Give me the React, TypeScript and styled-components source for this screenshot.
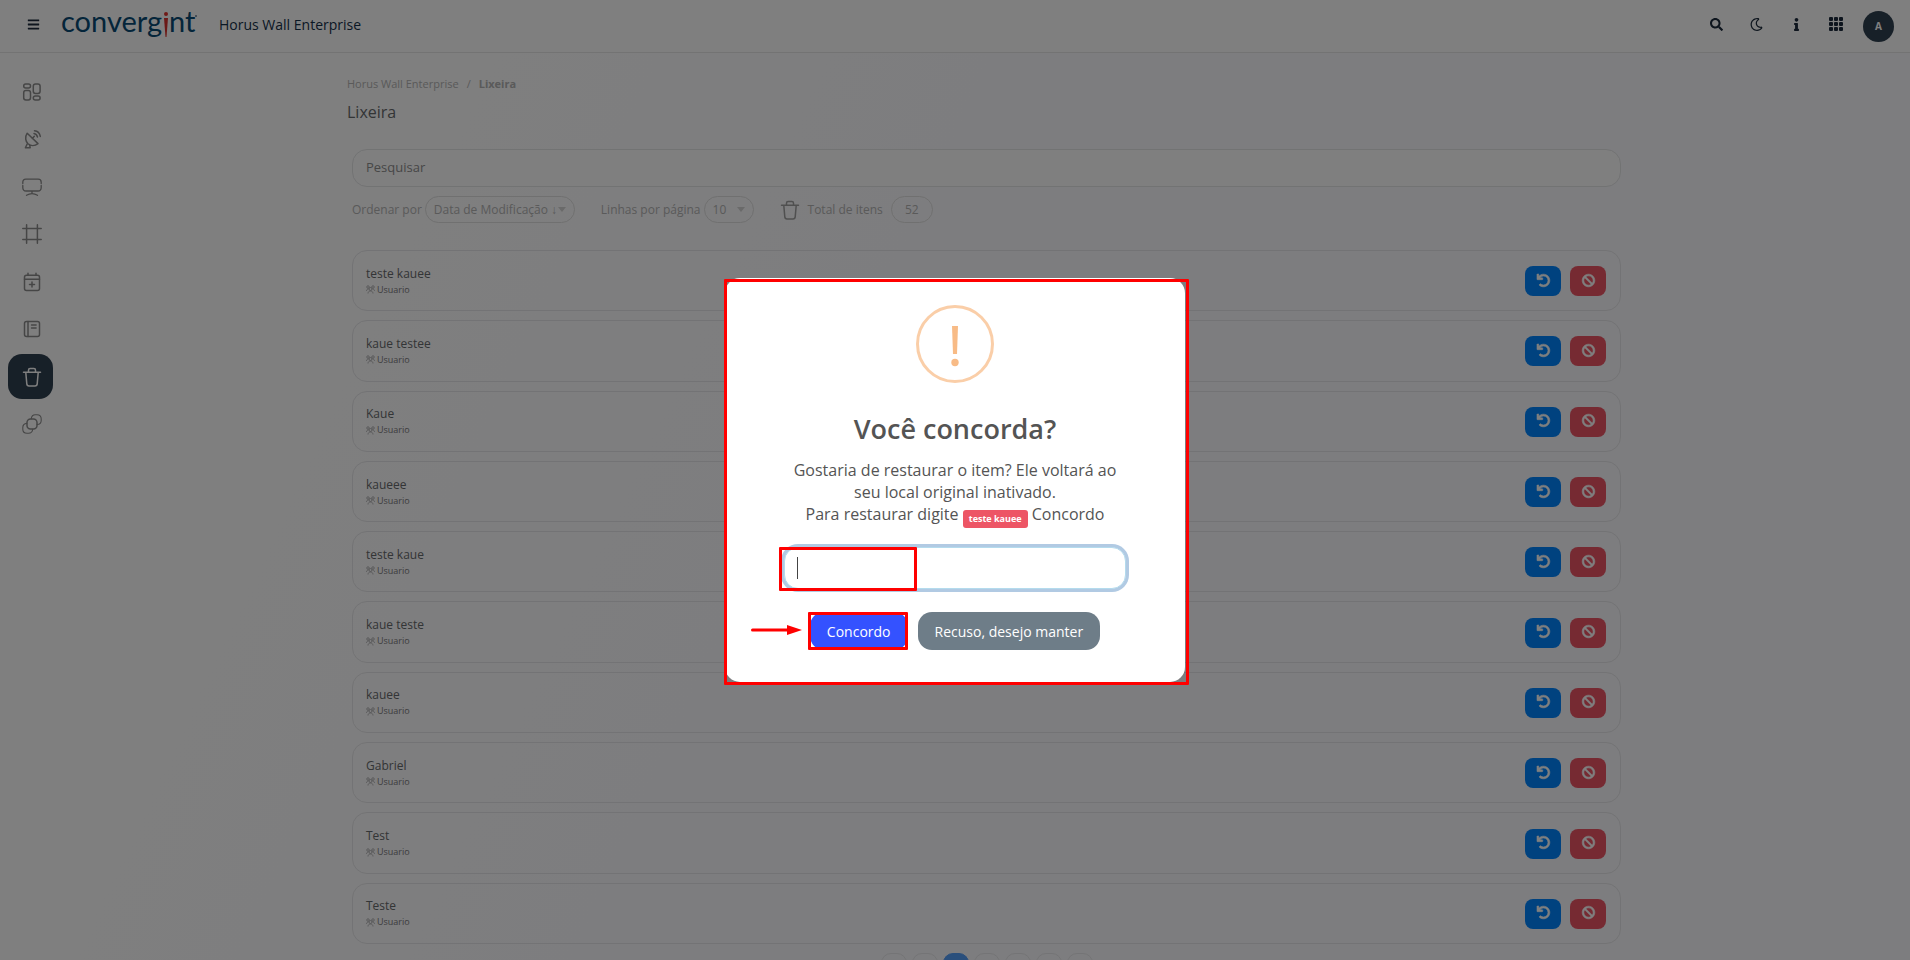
import React from "react";
import styled, { createGlobalStyle } from "styled-components";
import { FaBan, FaBars, FaInfo, FaRegMoon, FaSearch, FaUndo } from "react-icons/fa";
import { BsGrid3X3GapFill } from "react-icons/bs";

const GlobalStyle = createGlobalStyle`
  *, *::before, *::after { box-sizing: border-box; }
  html, body { margin: 0; height: 100%; overflow: hidden; }
  body {
    font-family: "Open Sans", "Noto Sans", sans-serif;
    font-size: 12px;
    color: #676a6c;
    background: #ffffff;
  }
  button, input, select { font-family: inherit; color: inherit; }
  a { color: inherit; text-decoration: none; }
`;

const Page = styled.div`
  min-height: 100vh;
  background: linear-gradient(115deg, #ffffff 15%, #fafafe 50%);
`;

const Header = styled.header`
  display: flex;
  align-items: center;
  height: 53px;
  padding: 0 16px 4px 26px;
  background: #ffffff;
  border-bottom: 1px solid #e7e7e7;
`;

const IconButton = styled.button`
  display: flex;
  align-items: center;
  justify-content: center;
  width: 14px;
  height: 24px;
  padding: 0;
  border: 0;
  background: none;
  color: #1c2b3c;
  svg { flex: none; }
`;

const Brand = styled.a`
  display: flex;
  margin: 0 20px 0 21px;
  svg { overflow: visible; }
`;

const AppName = styled.span`
  font-size: 14px;
  color: #14304a;
`;

const HeaderTools = styled.div`
  display: flex;
  align-items: center;
  gap: 20px;
  margin-left: auto;
`;

const ToolGroup = styled.div`
  display: flex;
  gap: 26px;
`;

const Avatar = styled.button`
  width: 31px;
  height: 31px;
  margin-top: 4px;
  padding: 0;
  border: 0;
  border-radius: 50%;
  background: #2f4050;
  color: #ffffff;
  font-size: 10px;
  font-weight: 700;
`;

const Body = styled.div`
  display: flex;
  align-items: flex-start;
`;

const Sidebar = styled.nav`
  display: flex;
  flex: none;
  flex-direction: column;
  justify-content: space-between;
  width: 63px;
  min-height: 378px;
  margin-top: 16px;
  padding-left: 8px;
`;

const NavLink = styled.a<{ $active?: boolean }>`
  display: flex;
  align-items: center;
  justify-content: center;
  width: 45px;
  height: 45px;
  padding-left: 3px;
  border-radius: 14px;
  background: ${(p) => (p.$active ? "#2f4050" : "transparent")};
  color: ${(p) => (p.$active ? "#ffffff" : "#8c8c8c")};
`;

const Main = styled.main`
  width: 100%;
  max-width: 1279px;
  margin: 0 auto;
  padding-top: 22px;
`;

const Breadcrumb = styled.ol`
  display: flex;
  gap: 8px;
  margin: 0;
  padding: 0;
  list-style: none;
  font-size: 11px;
  line-height: 18px;
  color: #b4b4b4;
`;

const Heading = styled.h1`
  margin: 5px 0 23px;
  font-size: 16px;
  font-weight: 400;
  line-height: 28px;
`;

const Content = styled.div`
  padding: 0 5px;
`;

const SearchInput = styled.input`
  display: block;
  width: 100%;
  height: 38px;
  padding: 0 13px 2px;
  border: 1px solid #e5e6e7;
  border-radius: 15px;
  background: #ffffff;
  font-size: 13px;
  &::placeholder { color: #8e8e8e; opacity: 1; }
`;

const Filters = styled.div`
  display: flex;
  align-items: center;
  height: 27px;
  margin: 9px 0 27px;
  color: #b4b4b4;
`;

const FilterLabel = styled.label`
  display: flex;
  align-items: center;
  gap: 3px;
  margin-right: 26px;
`;

const SelectBox = styled.span<{ $width: number }>`
  display: flex;
  align-items: center;
  position: relative;
  width: ${(p) => p.$width}px;
  height: 27px;
  border: 1px solid #e0e0e0;
  border-radius: 14px;
  select {
    width: 100%;
    padding: 0 8px;
    border: 0;
    background: none;
    appearance: none;
    font-size: 12px;
  }
  svg {
    position: absolute;
    right: 8px;
    pointer-events: none;
  }
`;

const Total = styled.span`
  display: flex;
  align-items: center;
  gap: 8px;
  svg { color: #a0a0a0; }
`;

const TotalCount = styled.output`
  width: 42px;
  border: 1px solid #e0e0e0;
  border-radius: 14px;
  line-height: 25px;
  text-align: center;
`;

const List = styled.ul`
  display: grid;
  grid-auto-rows: 1fr;
  gap: 9px;
  min-height: 694px;
  margin: 0;
  padding: 0;
  list-style: none;
`;

const Row = styled.li`
  display: flex;
  align-items: center;
  gap: 9px;
  padding: 1px 14px 0 13px;
  border: 1px solid #e7e7ea;
  border-radius: 15px;
`;

const RowText = styled.div`
  flex: 1;
  padding-top: 1px;
`;

const RowTitle = styled.div`
  font-size: 12px;
  line-height: 16px;
`;

const RowKind = styled.div`
  display: flex;
  align-items: center;
  gap: 2px;
  font-size: 9px;
  line-height: 16px;
  color: #7a7a7c;
  svg { opacity: 0.7; }
`;

const ActionButton = styled.button<{ $danger?: boolean }>`
  display: flex;
  align-items: center;
  justify-content: center;
  width: 36px;
  height: 30px;
  padding: 0 0 2px;
  border: 0;
  border-radius: 8px;
  background: ${(p) => (p.$danger ? "#ed5565" : "#0084ff")};
  color: #ffffff;
  svg { stroke: currentColor; stroke-width: 24px; overflow: visible; }
`;

const Pagination = styled.nav`
  display: flex;
  justify-content: center;
  gap: 5px;
  margin-top: 9px;
`;

const PageButton = styled.button<{ $current?: boolean }>`
  min-width: 26px;
  height: 34px;
  border: 1px solid ${(p) => (p.$current ? "#549ef8" : "#e9e9ec")};
  border-radius: 10px;
  background: ${(p) => (p.$current ? "#549ef8" : "transparent")};
  color: ${(p) => (p.$current ? "#ffffff" : "#b4b4b4")};
  font-size: 12px;
`;

const Backdrop = styled.div`
  position: fixed;
  inset: 0;
  display: flex;
  align-items: center;
  justify-content: center;
  background: rgba(0, 0, 0, 0.5);
`;

const Dialog = styled.section`
  position: relative;
  display: flex;
  flex-direction: column;
  align-items: center;
  width: 460px;
  padding: 27px 20px 32px;
  border-radius: 15px;
  background: #ffffff;
  color: #545454;
`;

const DialogTitle = styled.h2`
  margin: 26px 0 0;
  font-size: 27px;
  font-weight: 600;
  line-height: 40px;
`;

const DialogText = styled.p`
  width: 340px;
  margin: 10px 0 22px;
  font-size: 16px;
  line-height: 22px;
  text-align: center;
`;

const Tag = styled.span`
  display: inline-block;
  margin-bottom: -3px;
  padding: 0 6px;
  border-radius: 3px;
  background: #ed5565;
  color: #ffffff;
  font-size: 9px;
  font-weight: 700;
  line-height: 18px;
  vertical-align: -2px;
`;

const Marked = styled.div`
  position: relative;
`;

const Highlight = styled.span<{ $inset: string }>`
  position: absolute;
  inset: ${(p) => p.$inset};
  border: 3px solid #ff0000;
  border-radius: 1px;
  pointer-events: none;
`;

const ConfirmInput = styled.input`
  display: block;
  width: 342px;
  height: 42px;
  padding: 0 12px;
  border: 1px solid #b4dbed;
  border-radius: 14px;
  outline: 0;
  box-shadow: 0 0 0 3px #b1cae3;
  font-size: 18px;
`;

const Caret = styled.span`
  position: absolute;
  top: 10px;
  left: 13px;
  width: 1px;
  height: 22px;
  background: #444444;
`;

const DialogActions = styled.div`
  display: flex;
  gap: 10px;
  margin-top: 23px;
`;

const DialogButton = styled.button<{ $primary?: boolean }>`
  height: 38px;
  padding: 0 17px;
  border: 0;
  border-radius: 14px;
  background: ${(p) => (p.$primary ? "#3452ff" : "#6e7d88")};
  color: #ffffff;
  font-size: 14px;
`;

const Arrow = styled.svg`
  position: absolute;
  top: 13px;
  right: 106px;
`;

const strokeProps = {
  fill: "none",
  stroke: "currentColor",
  strokeWidth: 1.5,
  strokeLinecap: "round" as const,
  strokeLinejoin: "round" as const,
};

const Glyph = ({ children, size = 20 }: { children: React.ReactNode; size?: number }) => (
  <svg width={size} height={size} viewBox="0 0 20 20" aria-hidden="true" {...strokeProps}>
    {children}
  </svg>
);

const TrashGlyph = () => (
  <Glyph>
    <path d="M1.5 5.3h17M6.5 5V3.2Q6.5 1.6 8.1 1.6h3.8q1.6 0 1.6 1.6V5M3.8 5.5l1 11.4q.2 2.1 2.2 2.1h6q2 0 2.2-2.1l1-11.4" />
  </Glyph>
);

const navItems: { label: string; active?: boolean; icon: React.ReactNode }[] = [
  {
    label: "Painel",
    icon: (
      <Glyph>
        <rect x="1.7" y="2" width="6.8" height="4" rx="2" />
        <rect x="1.7" y="8.6" width="6.8" height="9.4" rx="2.2" />
        <rect x="11.3" y="2" width="6.8" height="9.4" rx="2.2" />
        <rect x="11.3" y="14" width="6.8" height="4" rx="2" />
      </Glyph>
    ),
  },
  {
    label: "Fontes",
    icon: (
      <Glyph>
        <path d="M5.2 4.2C2.6 8 3.6 12.6 6 14.8c2.6 2.2 6.8 2.3 10-.2zM5.4 14.5 3.4 18.7h4.8L7.5 15.7M10.3 9.5l2-2.3M12 4.6c1.8.3 3 1.5 3.5 3.4M12.5 1.8c3 .3 5.2 2.5 5.8 5.6" />
      </Glyph>
    ),
  },
  {
    label: "Monitores",
    icon: (
      <Glyph>
        <path d="M.8 6.5V5.2q0-3 3-3h12.4q3 0 3 3v1.3M.8 8.5v2q0 3.5 3.3 3.5h11.8q3.3 0 3.3-3.5v-2M10 14v2.5M4.5 18.3q5.5-3.2 11 0" strokeWidth={1.3} />
      </Glyph>
    ),
  },
  {
    label: "Molduras",
    icon: (
      <Glyph>
        <path d="M4.6.8v18.4M15.4.8v18.4M.8 4.6h18.4M.8 15.4h18.4" />
      </Glyph>
    ),
  },
  {
    label: "Agenda",
    icon: (
      <Glyph>
        <rect x="2.5" y="3.2" width="15" height="15.2" rx="2" />
        <path d="M2.5 7.3h15M6 1.3v1.9M14 1.3v1.9M10 10v5M7.5 12.5h5" />
      </Glyph>
    ),
  },
  {
    label: "Relatórios",
    icon: (
      <Glyph>
        <rect x="2.5" y="2.5" width="15" height="15" rx="2" />
        <path d="M6 2.5v15M9.5 6h4.6M9.5 9h4.6" />
      </Glyph>
    ),
  },
  { label: "Lixeira", active: true, icon: <TrashGlyph /> },
  {
    label: "Camadas",
    icon: (
      <Glyph>
        <rect x="5" y="5" width="10" height="10" rx="3.5" />
        <path d="M9.2 4.8c.4-2.7 1.5-4 4-4H15c2.8 0 4.2 1.4 4.2 4.2v1.5c0 2.5-1.4 3.8-4 4M4.800 9.400c-2.700.3-4 1.600-4 4.100v1.700c0 2.700 1.400 4 4.200 4h1.500c2.600 0 3.900-1.300 4.200-4" strokeWidth={1.1} />
      </Glyph>
    ),
  },
];

const Logo = () => (
  <svg width="138" height="36" viewBox="0 0 138 36" role="img" aria-label="convergint">
    <g fill="#084a74" fontFamily="Lato, sans-serif" fontSize="29">
      <text x="0" y="26">converg</text>
      <text x="108" y="26">nt</text>
    </g>
    <circle cx="105" cy="8" r="2" fill="#e0342f" />
    <path d="M103 12h4l-1.5 19h-1z" fill="#d8332e" />
    <circle cx="135" cy="10" r="1" fill="#6b8296" />
  </svg>
);

const UsersGlyph = () => (
  <svg width="9" height="9" viewBox="0 0 18 18" aria-hidden="true" fill="none" stroke="currentColor" strokeWidth="1.5">
    <circle cx="9" cy="8" r="3" />
    <circle cx="4" cy="4" r="2.5" />
    <circle cx="14" cy="4" r="2.5" />
    <path d="M4 17c0-3 2-5 5-5s5 2 5 5M1 12c0-2 1-4 4-4M17 12c0-2-1-4-4-4" />
  </svg>
);

const Chevron = () => (
  <svg width="8" height="5" viewBox="0 0 8 5" aria-hidden="true">
    <path d="M0 0h8L4 5z" fill="#d4d4d4" />
  </svg>
);

const items = [
  "teste kauee",
  "kaue testee",
  "Kaue",
  "kaueee",
  "teste kaue",
  "kaue teste",
  "kauee",
  "Gabriel",
  "Test",
  "Teste",
];

const pages = ["«", "‹", "1", "2", "3", "›", "»"];

export default function App() {
  return (
    <>
      <GlobalStyle />
      <Page>
        <Header>
          <IconButton aria-label="Menu"><FaBars size={13} /></IconButton>
          <Brand href="#"><Logo /></Brand>
          <AppName>Horus Wall Enterprise</AppName>
          <HeaderTools>
            <ToolGroup>
              <IconButton aria-label="Buscar"><FaSearch size={13} /></IconButton>
              <IconButton aria-label="Modo escuro"><FaRegMoon size={13} /></IconButton>
              <IconButton aria-label="Informações"><FaInfo size={13} /></IconButton>
              <IconButton aria-label="Aplicativos"><BsGrid3X3GapFill size={16} /></IconButton>
            </ToolGroup>
            <Avatar aria-label="Conta">A</Avatar>
          </HeaderTools>
        </Header>
        <Body>
          <Sidebar aria-label="Principal">
            {navItems.map((item) => (
              <NavLink key={item.label} href="#" aria-label={item.label} $active={item.active}>
                {item.icon}
              </NavLink>
            ))}
          </Sidebar>
          <Main>
            <Breadcrumb>
              <li><a href="#">Horus Wall Enterprise</a></li>
              <li>/</li>
              <li><b>Lixeira</b></li>
            </Breadcrumb>
            <Heading>Lixeira</Heading>
            <Content>
              <SearchInput type="search" placeholder="Pesquisar" aria-label="Pesquisar" />
              <Filters>
                <FilterLabel>
                  Ordenar por
                  <SelectBox $width={150}>
                    <select><option>Data de Modificação ↓</option></select>
                    <Chevron />
                  </SelectBox>
                </FilterLabel>
                <FilterLabel>
                  Linhas por página
                  <SelectBox $width={50}>
                    <select><option>10</option></select>
                    <Chevron />
                  </SelectBox>
                </FilterLabel>
                <Total>
                  <TrashGlyph />
                  Total de itens
                  <TotalCount>52</TotalCount>
                </Total>
              </Filters>
              <List>
                {items.map((name) => (
                  <Row key={name}>
                    <RowText>
                      <RowTitle>{name}</RowTitle>
                      <RowKind><UsersGlyph />Usuario</RowKind>
                    </RowText>
                    <ActionButton aria-label={`Restaurar ${name}`}><FaUndo size={13} /></ActionButton>
                    <ActionButton $danger aria-label={`Excluir ${name}`}><FaBan size={13} /></ActionButton>
                  </Row>
                ))}
              </List>
              <Pagination aria-label="Paginação">
                {pages.map((page) => (
                  <PageButton key={page} $current={page === "1"}>{page}</PageButton>
                ))}
              </Pagination>
            </Content>
          </Main>
        </Body>
      </Page>
      <Backdrop>
        <Dialog role="dialog" aria-modal="true" aria-labelledby="dialog-title">
          <svg width="78" height="78" viewBox="0 0 78 78" aria-hidden="true">
            <circle cx="39" cy="39" r="37.5" fill="none" stroke="#facea8" strokeWidth="3" />
            <path d="M36 21h6l-1 28h-4z" fill="#f8bb86" />
            <circle cx="39" cy="57.5" r="3.7" fill="#f8bb86" />
          </svg>
          <DialogTitle id="dialog-title">Você concorda?</DialogTitle>
          <DialogText>
            Gostaria de restaurar o item? Ele voltará ao seu local original inativado.
            <br />
            Para restaurar digite <Tag>teste kauee</Tag> Concordo
          </DialogText>
          <Marked>
            <ConfirmInput type="text" aria-label="Confirmação" />
            <Caret />
            <Highlight $inset="0 209px -2px -5px" />
          </Marked>
          <DialogActions>
            <Marked>
              <DialogButton $primary>Concordo</DialogButton>
              <Highlight $inset="0 0 0 -2px" />
              <Arrow width="51" height="10" viewBox="0 0 51 10" aria-hidden="true">
                <path d="M1.5 5H40" stroke="#ff0000" strokeWidth="3" strokeLinecap="round" />
                <path d="M36 0 51 5 36 10z" fill="#ff0000" />
              </Arrow>
            </Marked>
            <DialogButton>Recuso, desejo manter</DialogButton>
          </DialogActions>
          <Highlight $inset="1px -4px -3px -1px" />
        </Dialog>
      </Backdrop>
    </>
  );
}
